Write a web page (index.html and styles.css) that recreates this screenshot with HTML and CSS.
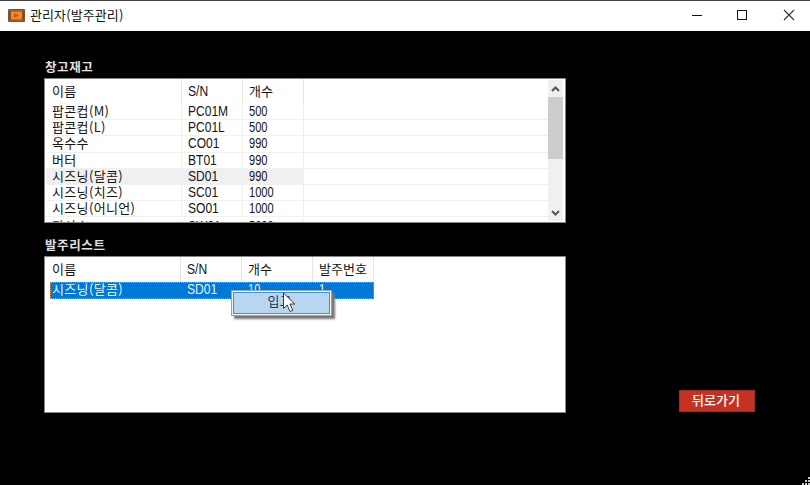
FILE: index.html
```html
<!DOCTYPE html>
<html lang="ko">
<head>
<meta charset="utf-8">
<title>관리자(발주관리)</title>
<link rel="stylesheet" href="styles.css">
</head>
<body>
<div class="window">
  <header class="titlebar">
    <svg class="app-icon" width="17" height="13" viewBox="0 0 17 13"><rect width="17" height="13" rx="1" fill="#82502c"/><path d="M1 1.500h15M1 11.500h15" stroke="#a56a38" stroke-dasharray="2 1"/><rect x="3" y="2.500" width="11" height="8" fill="#f58a16"/><path d="M6 4 11 6.500 6 9z" fill="#ee402c"/></svg>
    <h1 class="title">관리자(발주관리)</h1>
    <svg class="controls" width="110" height="14" viewBox="0 0 110 14" fill="none" stroke="#111"><path d="M1 7.500h10"/><rect x="46.500" y="2.500" width="9" height="9"/><path d="m93 2 10 10m0-10L93 12" stroke="#333" stroke-width="1.100"/></svg>
  </header>
  <main class="content">
    <section class="lists">
      <h2 class="label">창고재고</h2>
      <div class="list stock">
        <div class="rows">
          <div class="row head"><span>이름</span><span><i class="code">S/N</i></span><span>개수</span></div>
          <div class="row"><span>팝콘컵(M)</span><span><i class="code">PC01M</i></span><span><i class="num">500</i></span></div>
          <div class="row"><span>팝콘컵(L)</span><span><i class="code">PC01L</i></span><span><i class="num">500</i></span></div>
          <div class="row"><span>옥수수</span><span><i class="code">CO01</i></span><span><i class="num">990</i></span></div>
          <div class="row"><span>버터</span><span><i class="code">BT01</i></span><span><i class="num">990</i></span></div>
          <div class="row current"><span>시즈닝(달콤)</span><span><i class="code">SD01</i></span><span><i class="num">990</i></span></div>
          <div class="row"><span>시즈닝(치즈)</span><span><i class="code">SC01</i></span><span><i class="num">1000</i></span></div>
          <div class="row"><span>시즈닝(어니언)</span><span><i class="code">SO01</i></span><span><i class="num">1000</i></span></div>
          <div class="row last"><span>탄산수</span><span><i class="code">SW01</i></span><span><i class="num">5000</i></span></div>
        </div>
        <div class="scrollbar">
          <svg width="15" height="17" viewBox="0 0 15 17"><path d="m4 11 3.500-3.500L11 11" fill="none" stroke="#555" stroke-width="2"/></svg>
          <div class="thumb"></div>
          <svg class="down" width="15" height="17" viewBox="0 0 15 17"><path d="m4 7 3.500 3.500L11 7" fill="none" stroke="#555" stroke-width="2"/></svg>
        </div>
      </div>
      <h2 class="label second">발주리스트</h2>
      <div class="list orders">
        <div class="row head"><span>이름</span><span><i class="code">S/N</i></span><span>개수</span><span>발주번호</span></div>
        <div class="row selected"><span>시즈닝(달콤)</span><span><i class="code">SD01</i></span><span><i class="num">10</i></span><span><i class="num">1</i></span></div>
        <div class="menu">입고</div>
        <svg class="cursor" width="14" height="21" viewBox="0 0 14 21"><path d="M1.500 1v15.500l3.700-3.400 2.900 6.400 2.700-1.200-2.900-6.300h4.800z" fill="#fff" stroke="#333a48"/></svg>
      </div>
    </section>
    <button class="back">뒤로가기</button>
    <svg class="grip" width="8" height="8" viewBox="0 0 8 8" fill="#c8c8c8"><path d="M6 0h2v2H6zM3 3h2v2H3zM6 3h2v2H6zM0 6h2v2H0zM3 6h2v2H3zM6 6h2v2H6z"/></svg>
  </main>
</div>
</body>
</html>
```
FILE: styles.css
```css
* { box-sizing: border-box; }
body { margin: 0; overflow: hidden; background: #000; font-family: "Noto Sans CJK KR", sans-serif; font-size: 13px; color: #151515; }
.window { height: 485px; display: flex; flex-direction: column; }
.titlebar { height: 31px; flex: none; display: flex; align-items: center; padding: 0 11px 0 8px; background: #fff; border-top: 1px solid #444; }
.app-icon { margin-top: -2px; }
.title { margin: -2px 0 0 5px; font-size: 13px; font-weight: 400; line-height: 20px; letter-spacing: .1px; }
.controls { margin: -2px -2px 0 auto; }
.content { flex: 1; position: relative; display: flex; align-items: flex-start; padding-left: 44px; }
.lists { width: 522px; padding-top: 27px; }
.label { margin: 0; height: 20px; padding-left: 1px; color: #e0e0e0; font-size: 12.5px; line-height: 17px; font-weight: 700; letter-spacing: .6px; }
.second { margin-top: 13px; }
.list { position: relative; background: #fff; border: 1px solid #858585; }
.stock { height: 145px; display: flex; overflow: hidden; padding-left: 1px; }
.rows { flex: 1; }
.row { display: grid; grid-template-columns: 136px 61px 61px 1fr; height: 16.2px; line-height: 14px; white-space: nowrap; border-bottom: 1px solid #f0f0f0; font-weight: 400; }
.row span { padding-left: 6px; border-right: 1px solid #efefef; }
.row span:first-child { letter-spacing: .35px; }
.row i { display: inline-block; font: 14px/14px "Liberation Sans", sans-serif; transform-origin: left; }
.row .code { transform: scaleX(.86); }
.row .num { transform: scaleX(.79); }
.row.head { height: 25px; line-height: 24px; border-bottom: 0; }
.row.head span { border-color: #e4e4e4; }
.current span { background: #f0f0f0; }
.last { padding-top: 2px; }
.scrollbar { width: 15px; margin: 1px 2px 1px 0; background: #f0f0f0; display: flex; flex-direction: column; }
.thumb { height: 62px; background: #cdcdcd; }
.down { margin-top: auto; }
.orders { height: 157px; padding-left: 5px; }
.orders .row { grid-template-columns: 131px 61px 71px 61px; width: 324px; }
.orders .row span { padding-left: 6px; }
.orders .row span:first-child { padding-left: 2px; }
.orders .selected { height: 17px; background: #0078d7; color: #e4f3ff; border: 1px dotted #d49a58; line-height: 12px; }
.orders .selected span { border: 0; padding-left: 5px; }
.orders .selected span:first-child { padding-left: 1px; }
.orders .selected i { line-height: 12px; }
.menu { position: absolute; left: 186px; top: 33px; width: 101px; height: 26px; padding-right: 4px; border: 1px solid #a0a0a0; outline: 1px solid #f5f5f5; outline-offset: -2px; background: #b8d6f0; box-shadow: inset 0 0 0 2px #3994dc, 3px 3px 2px #777; text-align: center; line-height: 20px; color: #26384c; }
.cursor { position: absolute; left: 237px; top: 35px; }
.back { position: absolute; left: 679px; top: 359px; width: 76px; height: 22px; padding: 0 2px 2px 0; border: 1px solid #a22c20; background: #c53221; color: #fff; font: 500 13px/18px "Noto Sans CJK KR", sans-serif; }
.grip { position: absolute; right: 0; bottom: 0; }
```
